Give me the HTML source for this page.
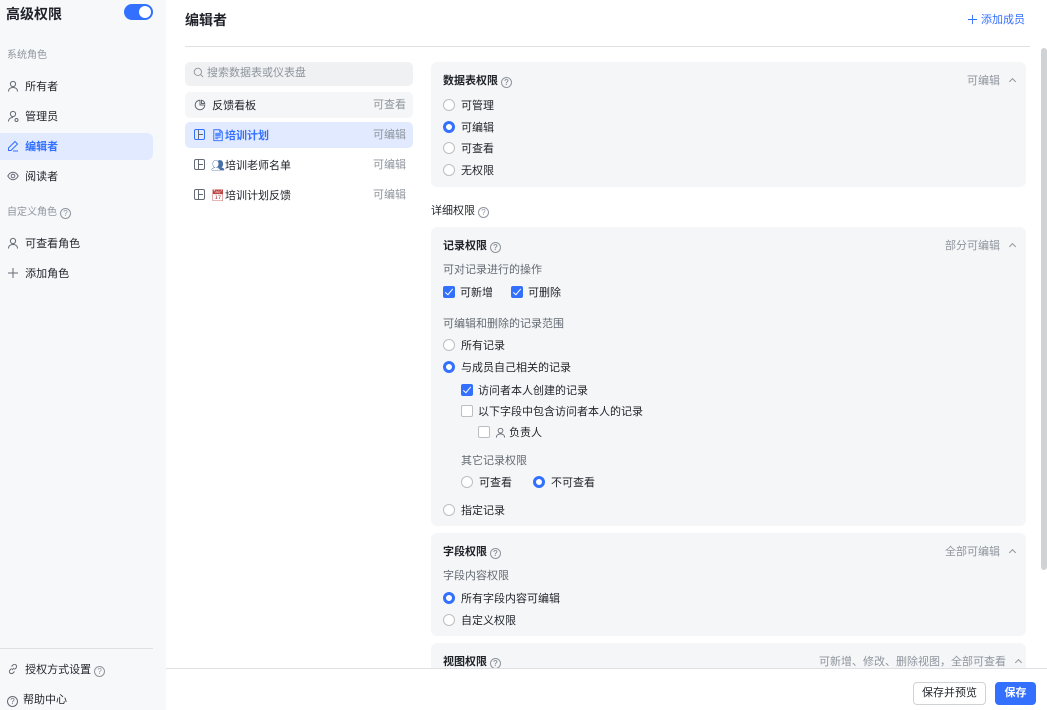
<!DOCTYPE html>
<html><head><meta charset="utf-8"><style>
*{margin:0;padding:0;box-sizing:border-box}
body{width:1047px;height:710px;overflow:hidden;background:#fff;font-family:"Liberation Sans","Noto Sans CJK SC",sans-serif;color:#1f2329;font-size:11px;position:relative}
.a{position:absolute;white-space:nowrap;line-height:13px}
.side{left:0;top:0;width:166px;height:710px;background:#f7f8fa}
.g{color:#8f959e}
.q{display:inline-block;width:11px;height:11px;border:1px solid #8f959e;border-radius:50%;font-size:8px;line-height:9px;text-align:center;color:#8f959e;vertical-align:-1px;margin-left:3px}
.card{background:#f5f6f7;border-radius:6px;left:431px;width:595px}
.r{display:inline-block;width:12px;height:12px;border:1px solid #bbbfc4;border-radius:50%;background:#fff;vertical-align:-2px;margin-right:6px}
.r.on{border:3.5px solid #3370ff}
.c{display:inline-block;width:12px;height:12px;border:1px solid #bbbfc4;border-radius:2px;background:#fff;vertical-align:-2px;margin-right:5px;position:relative}
.c.on{background:#3370ff;border-color:#3370ff}
.c.on:after{content:"";position:absolute;left:3px;top:0px;width:3px;height:7px;border:solid #fff;border-width:0 1.5px 1.5px 0;transform:rotate(40deg)}
.b{font-weight:bold}
.chev{display:inline-block;width:5px;height:5px;border-left:1px solid #8f959e;border-top:1px solid #8f959e;transform:rotate(45deg);margin-left:10px;vertical-align:0px}
svg{vertical-align:-2px}
.ic{display:inline-block;width:11px;height:11px;border:1px solid #646a73;border-radius:2px;vertical-align:-1px;margin-right:6px;position:relative}
.ic:before{content:"";position:absolute;left:3px;top:0;bottom:0;border-left:1px solid #646a73}
.ic:after{content:"";position:absolute;left:3px;right:1px;top:4px;border-top:1px solid #646a73}
</style></head><body>
<div class="a side"></div>
<div class="a b" style="left:6px;top:6px;font-size:14px;line-height:16px">高级权限</div>
<div class="a" style="left:124px;top:4px;width:29px;height:16px;border-radius:8px;background:#3370ff"><div style="position:absolute;right:2px;top:2px;width:12px;height:12px;border-radius:50%;background:#fff"></div></div>
<div class="a g" style="left:7px;top:49px;font-size:10px">系统角色</div>
<div class="a" style="left:7px;top:80px"><svg width="12" height="12" viewBox="0 0 12 12" fill="none" stroke="#646a73"><circle cx="6" cy="4" r="2.6"/><path d="M1.5 11.5c0-2.6 2-4 4.5-4s4.5 1.4 4.5 4"/></svg>&nbsp; 所有者</div>
<div class="a" style="left:7px;top:110px"><svg width="12" height="12" viewBox="0 0 12 12" fill="none" stroke="#646a73"><circle cx="6" cy="4" r="2.6"/><path d="M1.5 11.5c0-2.6 2-4 4.5-4"/><circle cx="9.5" cy="10" r="1.5"/></svg>&nbsp; 管理员</div>
<div class="a" style="left:0;top:133px;width:153px;height:27px;background:#e1eaff;border-radius:0 6px 6px 0"></div>
<div class="a b" style="left:7px;top:140px;color:#3370ff"><svg width="12" height="12" viewBox="0 0 12 12" fill="none" stroke="#3370ff"><path d="M8 1.5l2.5 2.5L4 10.5H1.5V8z"/><path d="M6 11h5"/></svg>&nbsp; 编辑者</div>
<div class="a" style="left:7px;top:170px"><svg width="12" height="12" viewBox="0 0 12 12" fill="none" stroke="#646a73"><path d="M0.8 6C2.5 3 4 2.3 6 2.3S9.5 3 11.2 6C9.5 9 8 9.7 6 9.7S2.5 9 .8 6z"/><circle cx="6" cy="6" r="1.8"/></svg>&nbsp; 阅读者</div>
<div class="a g" style="left:7px;top:206px;font-size:10px">自定义角色<span class="q">?</span></div>
<div class="a" style="left:7px;top:237px"><svg width="12" height="12" viewBox="0 0 12 12" fill="none" stroke="#646a73"><circle cx="6" cy="4" r="2.6"/><path d="M1.5 11.5c0-2.6 2-4 4.5-4s4.5 1.4 4.5 4"/></svg>&nbsp; 可查看角色</div>
<div class="a" style="left:7px;top:267px"><svg width="12" height="12" viewBox="0 0 12 12" stroke="#646a73"><path d="M6 1v10M1 6h10"/></svg>&nbsp; 添加角色</div>
<div class="a" style="left:0;top:648px;width:153px;border-top:1px solid #dee0e3"></div>
<div class="a" style="left:7px;top:663px"><svg width="12" height="12" viewBox="0 0 12 12" fill="none" stroke="#646a73"><path d="M5 7l2-2M4.5 5.5L3 7a2 2 0 003 3l1.5-1.5M7.5 6.5L9 5a2 2 0 00-3-3L4.5 3.5"/></svg>&nbsp; 授权方式设置<span class="q">?</span></div>
<div class="a" style="left:7px;top:694px"><span class="q" style="margin:0 5px 0 0;border-color:#646a73;color:#646a73">?</span>帮助中心</div>

<div class="a b" style="left:185px;top:12px;font-size:14px;line-height:16px">编辑者</div>
<div class="a" style="left:967px;top:14px;color:#3370ff"><svg width="11" height="11" viewBox="0 0 12 12" stroke="#3370ff"><path d="M6 1v10M1 6h10"/></svg> 添加成员</div>
<div class="a" style="left:185px;top:46px;width:845px;border-top:1px solid #dee0e3"></div>
<div class="a" style="left:1041px;top:48px;width:6px;height:522px;background:#d0d3d6;border-radius:3px"></div>

<div class="a" style="left:185px;top:62px;width:228px;height:24px;background:#f0f1f3;border-radius:5px"></div>
<div class="a g" style="left:193px;top:67px"><svg width="11" height="11" viewBox="0 0 12 12" fill="none" stroke="#8f959e"><circle cx="5.3" cy="5.3" r="4"/><path d="M8.3 8.3l2.7 2.7"/></svg> 搜索数据表或仪表盘</div>
<div class="a" style="left:185px;top:92px;width:228px;height:26px;background:#f5f6f7;border-radius:5px"></div>
<div class="a" style="left:194px;top:99px"><svg width="12" height="12" viewBox="0 0 12 12" fill="none" stroke="#646a73"><path d="M6 1.2A4.8 4.8 0 1 0 10.8 6H6z"/><path d="M7.5 1.3v3.2h3.2A4 4 0 0 0 7.5 1.3z"/></svg>&nbsp; 反馈看板</div>
<div class="a g" style="left:373px;top:99px">可查看</div>
<div class="a" style="left:185px;top:122px;width:228px;height:26px;background:#e1eaff;border-radius:5px"></div>
<div class="a b" style="left:194px;top:129px;color:#3370ff"><span class="ic" style="border-color:#3370ff"></span>📄︎培训计划</div>
<div class="a g" style="left:373px;top:129px">可编辑</div>
<div class="a" style="left:194px;top:159px"><span class="ic"></span><span style="color:#4a6fa5">👥︎</span>培训老师名单</div>
<div class="a g" style="left:373px;top:159px">可编辑</div>
<div class="a" style="left:194px;top:189px"><span class="ic"></span><span style="color:#b44">📅︎</span>培训计划反馈</div>
<div class="a g" style="left:373px;top:189px">可编辑</div>

<div class="a card" style="top:62px;height:125px"></div>
<div class="a b" style="left:443px;top:75px">数据表权限<span class="q">?</span></div>
<div class="a g" style="left:967px;top:75px">可编辑<span class="chev"></span></div>
<div class="a" style="left:443px;top:99px"><span class="r"></span>可管理</div>
<div class="a" style="left:443px;top:121px"><span class="r on"></span>可编辑</div>
<div class="a" style="left:443px;top:142px"><span class="r"></span>可查看</div>
<div class="a" style="left:443px;top:164px"><span class="r"></span>无权限</div>
<div class="a" style="left:431px;top:205px">详细权限<span class="q">?</span></div>

<div class="a card" style="top:227px;height:299px"></div>
<div class="a b" style="left:443px;top:240px">记录权限<span class="q">?</span></div>
<div class="a g" style="left:945px;top:240px">部分可编辑<span class="chev"></span></div>
<div class="a" style="left:443px;top:264px;color:#646a73">可对记录进行的操作</div>
<div class="a" style="left:443px;top:286px"><span class="c on"></span>可新增</div>
<div class="a" style="left:511px;top:286px"><span class="c on"></span>可删除</div>
<div class="a" style="left:443px;top:318px;color:#646a73">可编辑和删除的记录范围</div>
<div class="a" style="left:443px;top:339px"><span class="r"></span>所有记录</div>
<div class="a" style="left:443px;top:361px"><span class="r on"></span>与成员自己相关的记录</div>
<div class="a" style="left:461px;top:384px"><span class="c on"></span>访问者本人创建的记录</div>
<div class="a" style="left:461px;top:405px"><span class="c"></span>以下字段中包含访问者本人的记录</div>
<div class="a" style="left:478px;top:426px"><span class="c"></span><svg width="11" height="11" viewBox="0 0 12 12" fill="none" stroke="#646a73"><circle cx="6" cy="4" r="2.6"/><path d="M1.5 11.5c0-2.6 2-4 4.5-4s4.5 1.4 4.5 4"/></svg> 负责人</div>
<div class="a" style="left:461px;top:455px;color:#646a73">其它记录权限</div>
<div class="a" style="left:461px;top:476px"><span class="r"></span>可查看</div>
<div class="a" style="left:533px;top:476px"><span class="r on"></span>不可查看</div>
<div class="a" style="left:443px;top:504px"><span class="r"></span>指定记录</div>

<div class="a card" style="top:533px;height:103px"></div>
<div class="a b" style="left:443px;top:546px">字段权限<span class="q">?</span></div>
<div class="a g" style="left:945px;top:546px">全部可编辑<span class="chev"></span></div>
<div class="a" style="left:443px;top:570px;color:#646a73">字段内容权限</div>
<div class="a" style="left:443px;top:592px"><span class="r on"></span>所有字段内容可编辑</div>
<div class="a" style="left:443px;top:614px"><span class="r"></span>自定义权限</div>

<div class="a card" style="top:643px;height:30px"></div>
<div class="a b" style="left:443px;top:656px">视图权限<span class="q">?</span></div>
<div class="a g" style="left:819px;top:656px">可新增、修改、删除视图，全部可查看<span class="chev"></span></div>

<div class="a" style="left:166px;top:668px;width:881px;height:42px;background:#fff;border-top:1px solid #dee0e3"></div>
<div class="a" style="left:913px;top:682px;width:73px;height:23px;border:1px solid #d0d3d6;border-radius:4px;background:#fff;text-align:center;line-height:21px">保存并预览</div>
<div class="a b" style="left:995px;top:682px;width:41px;height:23px;border-radius:4px;background:#3370ff;color:#fff;text-align:center;line-height:23px">保存</div>
</body></html>
